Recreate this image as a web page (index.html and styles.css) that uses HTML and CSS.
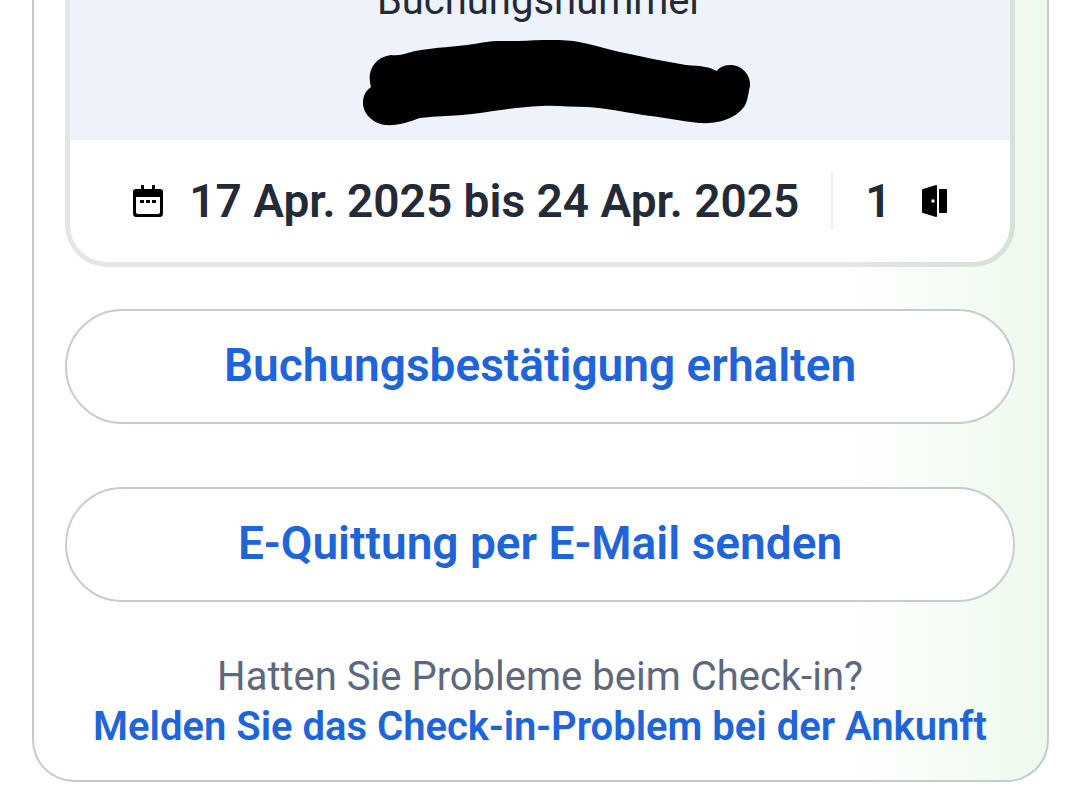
FILE: index.html
```html
<!DOCTYPE html>
<html lang="de">

<head>
   <meta charset="UTF-8">
   <meta name="viewport" content="width=device-width, initial-scale=1.0">
   <title>Buchung</title>
   <link rel="stylesheet" href="styles.css">
</head>

<body>
   <main class="card">
      <section class="ticket">
         <div class="ticket-number">
            <p class="label">Buchungsnummer</p>
            <svg class="hidden-number" width="388" height="86" viewBox="0 0 388 86" role="img" aria-label="Buchungsnummer verdeckt">
               <path d="M8 47C3 30 13 17 28 15C40 16 43 13 52 11C74 7 92 7 111 4C130 0 138 1 155 1C177 0 202 -1 216 2C233 5 242 9 257 12C280 17 300 21 323 25C340 26 346 27 354 31C357 26 363 25 369 25C380 26 388 36 387 46C385 54 385 61 381 67C371 80 353 84 336 83C318 81 298 77 280 75C262 72 242 68 224 67C208 67 192 65 178 66C154 67 134 71 109 74C91 76 74 76 57 78C45 82 36 86 22 85C9 83 0 73 0 63C0 55 3 51 8 47Z" />
            </svg>
         </div>
         <div class="ticket-dates">
            <svg class="icon" width="30" height="32" viewBox="0 0 30 32" aria-hidden="true">
               <path fill-rule="evenodd" d="M8 0h3v4h8V0h3v4h5q3 0 3 3v21q0 4-3 4H3q-3 0-3-4V7q0-3 3-3h5zM3 12v15q0 2 2 2h20q2 0 2-2V12z" />
               <path d="M7 15h4v3H7zM13 15h4v3h-4zM19 15h4v3h-4z" />
            </svg>
            <span class="dates">17 Apr. 2025 bis 24 Apr. 2025</span>
            <span class="rooms">1
               <svg class="icon" width="25" height="32" viewBox="0 0 25 32" aria-hidden="true">
                  <path fill-rule="evenodd" d="M0 5Q0 4 1 4L14 0q1 0 1 1v30q0 1-1 1L1 28q-1 0-1-1zM9.500 14.500v3h3v-3z" />
                  <path d="M17 4h7q1 0 1 1v22q0 1-1 1h-7z" />
               </svg>
            </span>
         </div>
      </section>

      <button type="button" class="btn">Buchungsbestätigung erhalten</button>
      <button type="button" class="btn">E-Quittung per E-Mail senden</button>

      <p class="help">Hatten Sie Probleme beim Check-in?<br>
         <a href="#">Melden Sie das Check-in-Problem bei der Ankunft</a>
      </p>
   </main>
</body>

</html>
```
FILE: styles.css
```css
* {
   box-sizing: border-box;
}

body {
   margin: 0;
   background-color: white;
   color: #242a38;
   font-family: Roboto, "Liberation Sans", sans-serif;
}

p {
   margin: 0;
}

.card {
   margin: 0 31px 24px 32px;
   padding: 0 32px 28px 31px;
   border: 2px solid #c5cacd;
   border-top: none;
   border-radius: 0 0 42px 42px;
   background: linear-gradient(to right, white 80%, #ecfaeb);
   display: flex;
   flex-direction: column;
   text-align: center;
}

.ticket {
   border: 5px solid rgba(36, 42, 56, 0.12);
   border-top: none;
   border-radius: 0 0 42px 42px;
   background-color: white;
   background-clip: padding-box;
   overflow: hidden;
   margin-bottom: 42px;
}

.ticket-number {
   display: flex;
   flex-direction: column;
   align-items: center;
   padding-bottom: 14px;
   background-color: #edf2fb;
}

.label {
   margin-top: -23px;
   padding-bottom: 15px;
   font-size: 40px;
   line-height: 48px;
}

.hidden-number {
   margin-left: 34px;
}

.ticket-dates {
   display: flex;
   align-items: center;
   justify-content: center;
   padding: 32px 0;
   font-size: 46px;
   font-weight: 600;
   line-height: 58px;
}

.icon {
   flex: none;
}

.dates {
   margin: 0 32px 0 26px;
}

.rooms {
   display: flex;
   align-items: center;
   gap: 30px;
   padding-left: 32px;
   border-left: 2px solid #e8f1fa;
}

.btn {
   height: 115px;
   margin-bottom: 63px;
   padding-bottom: 4px;
   border: 2px solid #c8cbd1;
   border-radius: 58px;
   background-color: white;
   color: #2065d8;
   font-family: inherit;
   font-size: 46px;
   font-weight: 600;
   cursor: pointer;
}

.btn + .btn {
   margin-bottom: 50px;
}

.help {
   color: #5d687f;
   font-size: 40px;
   line-height: 50px;
}

.help a {
   color: #2065d8;
   font-weight: 600;
   text-decoration: none;
}
```
